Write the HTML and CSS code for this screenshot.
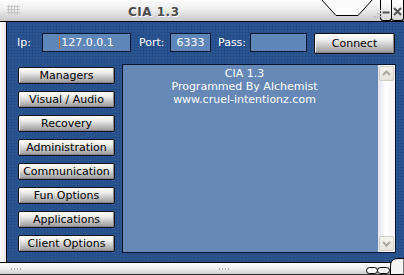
FILE: index.html
```html
<!DOCTYPE html>
<html>
<head>
<meta charset="utf-8">
<link rel="stylesheet" href="styles.css">
</head>
<body>
<div class="window">
  <div class="titlebar">
    <span class="grip"></span>
    <span class="title">CIA 1.3</span>
    <svg class="notch" width="64" height="22" viewBox="0 0 64 22">
      <polygon points="3,-1 18,15.5 40,15.5 55,-1" fill="#fbfbfb" stroke="#000" stroke-width="1"/>
      <g fill="#b4b4b4">
        <rect x="56" y="16" width="1.5" height="1.5"/><rect x="59" y="16" width="1.5" height="1.5"/><rect x="62" y="16" width="1.5" height="1.5"/>
        <rect x="59" y="13" width="1.5" height="1.5"/><rect x="62" y="13" width="1.5" height="1.5"/>
        <rect x="62" y="10" width="1.5" height="1.5"/>
      </g>
    </svg>
    <div class="caption">
      <span class="cbtn cmin">
        <svg width="10" height="20" viewBox="0 0 10 20"><line x1="1.5" y1="12.5" x2="8.5" y2="12.5" stroke="#555" stroke-width="2"/></svg>
      </span>
      <span class="cbtn cclose">
        <svg width="11" height="20" viewBox="0 0 11 20"><path d="M2,8 L9,15 M9,8 L2,15" stroke="#555" stroke-width="2"/></svg>
      </span>
    </div>
  </div>
  <div class="body">
    <div class="frame-left"></div>
    <div class="main">
      <div class="conn">
        <span class="lbl lbl-ip">Ip:</span>
        <span class="field f-ip"><span class="caret"></span>127.0.0.1</span>
        <span class="lbl lbl-port">Port:</span>
        <span class="field f-port">6333</span>
        <span class="lbl lbl-pass">Pass:</span>
        <span class="field f-pass"></span>
        <button class="btn connect">Connect</button>
      </div>
      <div class="content">
        <div class="menu">
          <button class="btn">Managers</button>
          <button class="btn">Visual / Audio</button>
          <button class="btn">Recovery</button>
          <button class="btn">Administration</button>
          <button class="btn">Communication</button>
          <button class="btn">Fun Options</button>
          <button class="btn">Applications</button>
          <button class="btn">Client Options</button>
        </div>
        <div class="panel">
          <div class="ptext">
            <div>CIA 1.3</div>
            <div>Programmed By Alchemist</div>
            <div>www.cruel-intentionz.com</div>
          </div>
          <div class="scroll">
            <span class="arrow">
              <svg width="13" height="13" viewBox="0 0 13 13"><polyline points="3,8 6.5,4.5 10,8" fill="none" stroke="#a8a8a0" stroke-width="2"/></svg>
            </span>
            <span class="arrow">
              <svg width="13" height="13" viewBox="0 0 13 13"><polyline points="3,5 6.5,8.5 10,5" fill="none" stroke="#a8a8a0" stroke-width="2"/></svg>
            </span>
          </div>
        </div>
      </div>
    </div>
  </div>
  <div class="bottombar">
    <span class="bdots bdots-left"></span>
    <span class="bdots bdots-mid"></span>
    <svg class="bcaps" width="38" height="18" viewBox="0 0 38 18">
      <rect x="0.5" y="10.5" width="11" height="6" rx="3" fill="#f6f6f6" stroke="#000"/>
      <rect x="11.5" y="10.5" width="12" height="6" rx="3" fill="#f6f6f6" stroke="#000"/>
      <path d="M24.5,17.5 L24.5,9 Q24.5,1.5 32,1.5 L38,1.5 L38,17.5 Z" fill="#f4f4f4" stroke="#000"/>
    </svg>
  </div>
</div>
</body>
</html>
```
FILE: styles.css
```css
* { box-sizing: border-box; margin: 0; padding: 0; }
html, body { width: 404px; height: 275px; overflow: hidden; background: #fff; }
body { font-family: "DejaVu Sans", Verdana, sans-serif; font-size: 11px; }

.window { display: flex; flex-direction: column; width: 404px; height: 275px; }

.titlebar {
  position: relative;
  display: flex;
  align-items: flex-start;
  height: 22px;
  background: linear-gradient(#fdfdfd, #ededed 45%, #c8c8c8);
  border-bottom: 1px solid #000;
}
.grip {
  width: 13px; height: 10px; margin: 5px 0 0 7px;
  background: radial-gradient(circle, #bcbcbc 0.9px, transparent 1.3px) 0 0 / 3px 3px;
}
.title {
  margin: 4px 0 0 108px;
  font-weight: bold; font-size: 12px; line-height: 16px;
  letter-spacing: 0.5px;
  color: #4b4b4b;
  text-shadow: 1px 1px 0 #fff;
}
.notch { position: absolute; left: 318px; top: 0; }
.caption { margin-left: auto; display: flex; flex-shrink: 0; }
.cbtn {
  display: flex; justify-content: center;
  flex-shrink: 0;
  height: 21px;
  border: 1px solid #000; border-top: none;
  border-radius: 0 0 3px 3px;
  background: linear-gradient(#ffffff, #efefef 50%, #d6d6d6);
}
.cmin { width: 12px; }
.cclose { width: 13px; margin-left: -1px; }

.body { display: flex; height: 240px; }
.frame-left {
  width: 7px;
  background: linear-gradient(90deg, #ffffff, #e4e4e4);
  border-right: 1px solid #000;
}
.main {
  flex: 1;
  display: flex; flex-direction: column;
  background-color: #2b5692;
  background-image: radial-gradient(circle, #234b85 0.9px, transparent 1.2px);
  background-size: 3px 3px;
}

.conn { display: flex; align-items: flex-start; height: 21px; margin: 11px 0 0 10px; }
.lbl { color: #fff; line-height: 19px; }
.lbl-ip { width: 25px; }
.lbl-port { width: 31px; margin-left: 8px; }
.lbl-pass { width: 32px; margin-left: 7px; }
.field {
  height: 19px;
  background: #5f86b8;
  border: 1px solid #0b1730;
  color: #fff; line-height: 17px; text-align: center;
}
.f-ip { width: 89px; }
.caret {
  display: inline-block; width: 1px; height: 13px;
  background: #c8741e; vertical-align: -3px; margin-right: 1px;
}
.f-port { width: 41px; }
.f-pass { width: 57px; }

.btn {
  display: block;
  height: 17px;
  border: 1px solid #111;
  border-radius: 2px;
  background: linear-gradient(#ffffff 0%, #eeeeee 30%, #d0d0d0 55%, #b0b0b0 80%, #969696 100%);
  box-shadow: inset 1px 1px 0 #fff, inset -1px -1px 0 #888;
  font-family: "DejaVu Sans", Verdana, sans-serif;
  font-size: 11px; line-height: 15px;
  color: #000; text-align: center;
}
.connect { margin-left: 7px; width: 81px; height: 21px; line-height: 19px; }

.content { display: flex; margin-top: 10px; }
.menu { width: 97px; margin-left: 11px; padding-top: 3px; display: flex; flex-direction: column; gap: 7px; }
.menu .btn { width: 97px; }

.panel {
  width: 274px; height: 189px; margin-left: 7px;
  border: 1px solid #06122a;
  background: #6588b6;
  display: flex;
}
.ptext {
  flex: 1;
  color: #fff; text-align: center; line-height: 13px;
  padding: 2px 12px 0 0;
}
.scroll {
  width: 17px;
  background: linear-gradient(90deg, #e2e4ec, #ffffff 45%, #f3f3f6);
  display: flex; flex-direction: column; justify-content: space-between;
  padding: 1px;
}
.arrow {
  display: flex; align-items: center; justify-content: center;
  width: 15px; height: 15px;
  background: linear-gradient(#f4f3ec, #e6e5dc);
  border: 1px solid #cfcec4;
  border-radius: 2px;
}

.bottombar {
  position: relative;
  display: flex; align-items: center;
  height: 13px;
  border-top: 1px solid #000;
  border-bottom: 1px solid #333;
  background: linear-gradient(#ffffff, #ececec 55%, #cdcdcd);
}
.bdots {
  height: 2px; width: 11px;
  background: radial-gradient(circle, #b0b0b0 0.8px, transparent 1.1px) 0 0 / 3px 2px;
}
.bdots-left { margin-left: 10px; }
.bdots-mid { margin-left: 197px; }
.bcaps { position: absolute; right: 0; bottom: -1px; }
```
